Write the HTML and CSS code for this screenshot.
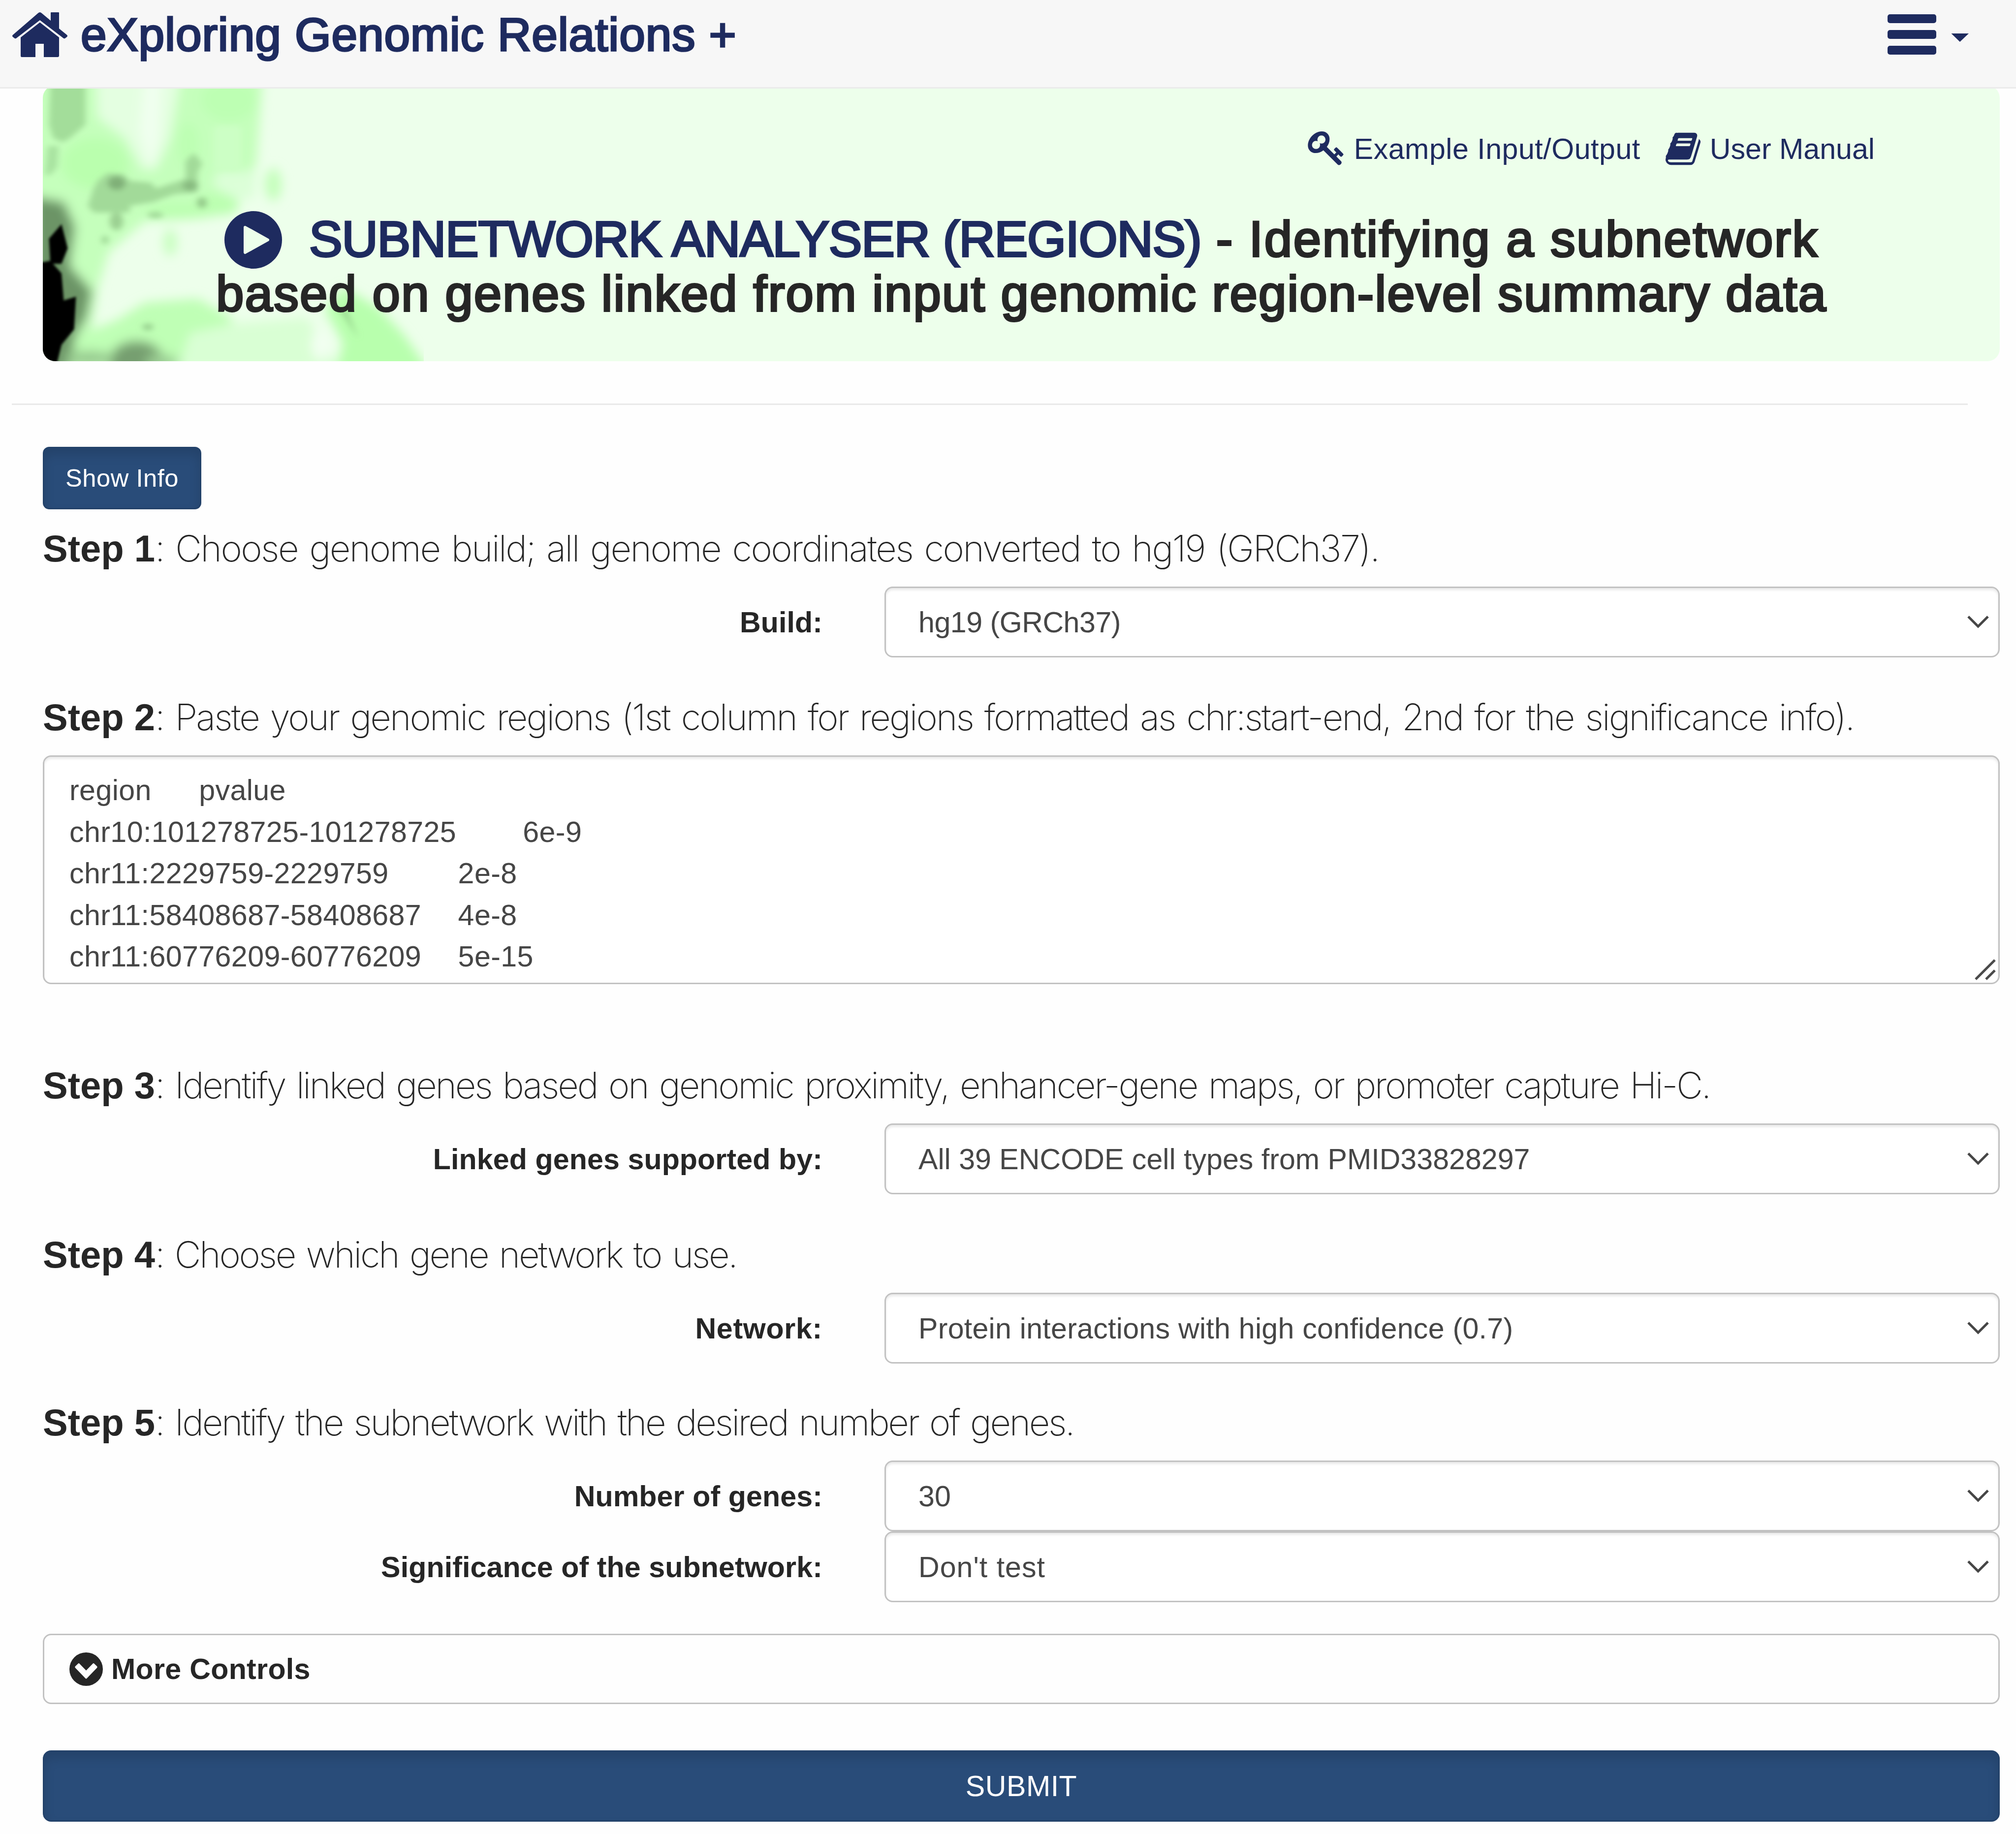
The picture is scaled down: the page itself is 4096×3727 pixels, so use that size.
FILE: index.html
```html
<!DOCTYPE html>
<html lang="en">
<head>
<meta charset="utf-8">
<title>eXploring Genomic Relations +</title>
<link rel="stylesheet" href="styles.css">
</head>
<body>
<header class="navbar">
  <a class="brand">
    <svg class="home" viewBox="0 0 112 91"><path d="M52 2Q56-2 60 2L78 17V1Q78 0 79 0H94Q95 0 95 1V33L111 46Q113 48 111 50L107 53Q105 54 103 52L56 16L9 52Q7 54 5 53L1 50Q-1 48 1 46Z"/><path d="M56 20.500L95 51V88Q95 91 92 91H64V64H47V91H19Q17 91 17 88V51Z"/></svg>
    <span class="brand-name">eXploring Genomic Relations +</span>
  </a>
  <svg class="menu" viewBox="0 0 165 82"><rect y="0" width="99" height="18" rx="5"/><rect y="32" width="99" height="18" rx="5"/><rect y="64" width="99" height="18" rx="5"/><path d="M129.500 39H165L147 56Z"/></svg>
</header>

<section class="banner">
  <svg class="art" viewBox="33 27 1367 1428" preserveAspectRatio="none">
    <defs>
      <filter id="b0" x="-50%" y="-50%" width="200%" height="200%"><feGaussianBlur stdDeviation="5 7"/></filter>
      <filter id="b1" x="-50%" y="-50%" width="200%" height="200%"><feGaussianBlur stdDeviation="11 14"/></filter>
      <filter id="b2" x="-50%" y="-50%" width="200%" height="200%"><feGaussianBlur stdDeviation="20 28"/></filter>
    </defs>
    <g filter="url(#b2)">
      <path fill="#c5ffbc" d="M-60-60H825L800 440L700 620L730 690L600 715L400 730L270 890L230 1080L190 1500H-60Z"/>
      <path fill="#e4ffe1" d="M225-40H530L490 300L440 460H390L330 300L230 190Z"/>
      <path fill="#f0ffef" d="M400-40H460L450 300L420 460L380 260Z"/>
      <path fill="#dcffd8" d="M660 470H800L790 620L700 600L640 540Z"/>
      <ellipse fill="#baffae" cx="220" cy="430" rx="120" ry="130"/>
      <ellipse fill="#bbffb0" cx="660" cy="640" rx="80" ry="50"/>
      <ellipse fill="#bbffb0" cx="520" cy="680" rx="120" ry="40"/>
      <ellipse fill="#bdffb3" cx="555" cy="330" rx="40" ry="110"/>
      <ellipse fill="#bdffb3" cx="700" cy="100" rx="100" ry="110"/>
      <ellipse fill="#c4ffbb" cx="860" cy="540" rx="30" ry="85"/>
      <ellipse fill="#c8ffc0" cx="490" cy="840" rx="24" ry="70"/>
      <path fill="#bfffb5" d="M120 1500L150 1330L300 1240L400 1150L590 1130L710 1230L720 1300L600 1500Z"/>
      <path fill="#d9ffd4" d="M560 1310L720 1260L980 1230L1100 1500H520Z"/>
      <path fill="#b8ffad" d="M1045 1190L1110 1070L1240 1180L1330 1320L1430 1530H1080L1110 1360Z"/>
      <ellipse fill="#f2fff1" cx="1030" cy="1370" rx="34" ry="80"/>
      <path fill="#6c9466" d="M0 600L110 630L150 760L130 960L210 1090L190 1230L150 1330L130 1500H0Z"/>
      <ellipse fill="#769f70" cx="370" cy="1460" rx="100" ry="110"/>
      <ellipse fill="#98cb90" cx="200" cy="1440" rx="90" ry="40"/>
      <ellipse fill="#9ccf94" cx="460" cy="1460" rx="60" ry="40"/>
    </g>
    <g filter="url(#b1)">
      <path fill="#a3dd9a" d="M60 10H186V230L130 300L105 320L70 300L55 230Z"/>
      <path fill="#a9e3a0" d="M50 340H90L85 450L60 490H40Z"/>
      <rect fill="#ccffc5" x="645" y="235" width="100" height="230" rx="20"/>
      <path fill="#a2da99" d="M230 520L265 480L320 485L345 520L420 530L440 560L545 510L545 420L575 375L605 430L588 480V580L505 590L430 630L345 650V685H215L195 650L215 560Z"/>
      <ellipse fill="#80b078" cx="298" cy="532" rx="32" ry="36"/>
      <ellipse fill="#88bb80" cx="562" cy="545" rx="28" ry="28"/>
      <ellipse fill="#94ca8b" cx="604" cy="634" rx="18" ry="28"/>
      <ellipse fill="#9fd796" cx="437" cy="697" rx="28" ry="15"/>
      <ellipse fill="#9bd092" cx="297" cy="730" rx="24" ry="46"/>
      <ellipse fill="#9fd796" cx="256" cy="826" rx="12" ry="22"/>
      <path fill="#98d58f" d="M1095 1180L1125 1195L1165 1335Z"/>
      <ellipse fill="#99d190" cx="410" cy="1278" rx="20" ry="18"/>
    </g>
    <g filter="url(#b0)">
      <path d="M0 950L60 935L100 1000L108 1140L152 1120L145 1290L100 1370L78 1500H0Z"/>
      <path d="M55 820L100 745L122 870L100 950L60 950Z"/>
    </g>
  </svg>
  <nav class="links">
    <a class="link link-example"><svg viewBox="0 128 1683 1650"><path d="M832 512q0-80-56-136t-136-56-136 56-56 136q0 42 19 83-41-19-83-19-80 0-136 56t-56 136 56 136 136 56 136-56 56-136q0-42-19-83 41 19 83 19 80 0 136-56t56-136zm851 704q0 17-49 66t-66 49q-9 0-28.500-16t-36.500-33-38.500-40-24.500-26l-96 96 220 220q28 28 28 68 0 42-39 81t-81 39q-40 0-68-28l-671-671q-176 131-365 131-163 0-265.500-102.500t-102.500-265.500q0-160 95-313t248-248 313-95q163 0 265.500 102.500t102.500 265.500q0 189-131 365l355 355 96-96q-3-3-26-24.500t-40-38.500-33-36.500-16-28.500q0-17 49-66t66-49q13 0 23 10 6 6 46 44.500t82 79.500 86.500 86 73 78 28.500 41z"/></svg><span>Example Input/Output</span></a>
    <a class="link link-manual"><svg viewBox="0 128 1664 1536"><path d="M1639 478q40 57 18 129l-275 906q-19 64-76.500 107.500t-122.500 43.500h-923q-77 0-148.500-53.500t-99.500-131.500q-24-67-2-127 0-4 3-27t4-37q1-8-3-21.500t-3-19.500q2-11 8-21t16.500-23.500 16.500-23.500q23-38 45-91.500t30-91.500q3-10 .5-30t-.5-28q3-11 17-28t17-23q21-36 42-92t25-90q1-9-2.500-32t.5-28q4-13 22-30.500t22-22.500q19-26 42.500-84.500t27.500-96.500q1-8-3-25.500t-2-26.500q2-8 9-18t18-23 17-21q8-12 16.500-30.500t15-35 16-36 19.500-32 26.500-23.500 36-11.500 47.500 5.500l-1 3q38-9 51-9h761q74 0 114 56t18 130l-274 906q-36 119-71.500 153.500t-128.500 34.500h-869q-27 0-38 15-11 16-1 43 24 70 144 70h923q29 0 56-15.500t35-41.500l300-987q7-22 5-57 38 15 59 43zm-1064 2q-4 13 2 22.500t20 9.500h608q13 0 25.500-9.500t16.500-22.500l21-64q4-13-2-22.500t-20-9.500h-608q-13 0-25.500 9.500t-16.500 22.500zm-83 256q-4 13 2 22.500t20 9.500h608q13 0 25.500-9.500t16.500-22.500l21-64q4-13-2-22.500t-20-9.500h-608q-13 0-25.500 9.500t-16.500 22.500z"/></svg><span>User Manual</span></a>
  </nav>
  <h3 class="title">
    <span class="title-line title-first"><svg class="play" viewBox="0 0 117 117"><circle cx="58.500" cy="58.500" r="58.500"/><path d="M42 33L88 58.500L42 84Z"/></svg><span class="tool">SUBNETWORK ANALYSER (REGIONS)</span> <span class="lead">- Identifying a subnetwork</span></span>
    <span class="title-line title-second">based on genes linked from input genomic region-level summary data</span>
  </h3>
</section>

<hr class="rule">

<main class="form">
  <button class="btn btn-info">Show Info</button>

  <h4 class="step step-1"><b>Step 1</b><span>: Choose genome build; all genome coordinates converted to hg19 (GRCh37).</span></h4>
  <div class="row"><label>Build:</label><div class="select"><span class="v-build">hg19 (GRCh37)</span><svg class="chev" viewBox="0 0 46 28"><path d="M3 3L23 23L43 3"/></svg></div></div>

  <h4 class="step step-2"><b>Step 2</b><span>: Paste your genomic regions (1st column for regions formatted as chr:start-end, 2nd for the significance info).</span></h4>
  <div class="textarea"><pre>region	pvalue
chr10:101278725-101278725	6e-9
chr11:2229759-2229759		2e-8
chr11:58408687-58408687	4e-8
chr11:60776209-60776209	5e-15</pre><svg class="grip" viewBox="0 0 43 43"><path d="M2 41L41 2M23 41L41 23"/></svg></div>

  <h4 class="step step-3"><b>Step 3</b><span>: Identify linked genes based on genomic proximity, enhancer-gene maps, or promoter capture Hi-C.</span></h4>
  <div class="row"><label>Linked genes supported by:</label><div class="select"><span>All 39 ENCODE cell types from PMID33828297</span><svg class="chev" viewBox="0 0 46 28"><path d="M3 3L23 23L43 3"/></svg></div></div>

  <h4 class="step step-4"><b>Step 4</b><span>: Choose which gene network to use.</span></h4>
  <div class="row"><label class="l-network">Network:</label><div class="select"><span class="v-network">Protein interactions with high confidence (0.7)</span><svg class="chev" viewBox="0 0 46 28"><path d="M3 3L23 23L43 3"/></svg></div></div>

  <h4 class="step step-5"><b>Step 5</b><span>: Identify the subnetwork with the desired number of genes.</span></h4>
  <div class="row"><label>Number of genes:</label><div class="select"><span>30</span><svg class="chev" viewBox="0 0 46 28"><path d="M3 3L23 23L43 3"/></svg></div></div>
  <div class="row"><label>Significance of the subnetwork:</label><div class="select"><span class="v-test">Don't test</span><svg class="chev" viewBox="0 0 46 28"><path d="M3 3L23 23L43 3"/></svg></div></div>

  <div class="more"><svg viewBox="0 0 100 100"><circle cx="50" cy="50" r="50"/><path d="M17.500 46Q15.500 43.500 17.500 41.500L26 33.500Q28 31.500 30 33.500L50 54L70 33.500Q72 31.500 74 33.500L82.500 41.500Q84.500 43.500 82.500 46L52 77.500Q50 79.500 48 77.500Z"/></svg><span>More Controls</span></div>
  <button class="btn btn-submit">SUBMIT</button>
</main>
</body>
</html>
```
FILE: styles.css
```css
* { box-sizing: border-box; }
body {
  margin: 0;
  background: #fefefe;
  color: #262626;
  font-family: "Liberation Sans", Arial, sans-serif;
  font-size: 59.15px;
}
svg { display: block; flex: none; }

.navbar {
  position: relative;
  z-index: 1;
  display: flex;
  justify-content: space-between;
  height: 180px;
  padding: 0 96px 37px 25px;
  background: #f7f7f7;
  border-bottom: 3px solid #ebebeb;
  color: #1e2b5f;
  fill: #1e2b5f;
}
.brand { display: flex; align-items: center; gap: 27px; }
.home { width: 112px; height: 91px; }
.brand-name { font-size: 94.6px; line-height: 140px; letter-spacing: .9px; -webkit-text-stroke: 3.6px; }
.menu { width: 165px; height: 82px; align-self: center; }

.banner {
  position: relative;
  height: 560px;
  margin: -6px 33px 0 87px;
  padding-top: 93px;
  border-radius: 25px;
  background: #edffeb;
  overflow: hidden;
}
.art { position: absolute; left: 0; top: 0; width: 774px; height: 560px; }
.links { position: relative; display: flex; justify-content: flex-end; gap: 51px; padding-right: 254px; }
.link { display: flex; align-items: center; gap: 19px; line-height: 70px; color: #1e2b5f; fill: #1e2b5f; }
.link svg { width: 73px; height: 71px; }
.link-example { gap: 21px; letter-spacing: .5px; }
.link-manual svg { width: 71px; height: 69px; }

.title { position: relative; margin: 92px 0 0; font-size: 101.4px; font-weight: 400; line-height: 111px; -webkit-text-stroke: 4px; }
.title-line { display: flex; align-items: center; height: 111px; white-space: pre; }
.title-first { padding-left: 369px; }
.title-second { padding-left: 352px; letter-spacing: 2.2px; }
.play { width: 117px; height: 117px; margin: 4px 55px 0 0; fill: #1e2b5f; }
.play path { fill: #edffeb; stroke: #edffeb; stroke-width: 6; stroke-linejoin: round; }
.tool { color: #1e2b5f; letter-spacing: -1.15px; margin-right: 30px; }
.lead { letter-spacing: 2.65px; }

.rule { height: 3px; margin: 86px 98px 0 24px; border: 0; background: #e9e9e9; }

.form { display: flex; flex-direction: column; padding: 85px 33px 0 87px; }
.btn {
  padding: 0;
  border: 3px solid #23426a;
  border-radius: 17px;
  background: #294c79;
  box-shadow: inset 0 13px 21px rgba(0, 0, 0, .125);
  color: #fff;
  font-family: inherit;
}
.btn-info { width: 322px; height: 127px; border-radius: 13px; font-size: 50.7px; letter-spacing: .5px; line-height: 121px; }
.btn-submit { height: 145px; margin-top: 94px; font-size: 59.15px; letter-spacing: .5px; }

.step { display: flex; margin: 80px 0 35px; height: 84px; font-size: 76px; line-height: 83px; font-weight: 400; white-space: nowrap; }
.step b { font-weight: 700; }
.step span { font-family: Inter, "Liberation Sans", sans-serif; font-weight: 200; font-size: 74px; word-spacing: 5px; }
.step-1 { margin-top: 38px; }
.step-1 span { letter-spacing: -2.5px; }
.step-2 span { letter-spacing: -2.9px; }
.step-3 { margin-top: 164px; }
.step-3 span { letter-spacing: -3.16px; }
.step-4 { margin-top: 81px; }
.step-4 span { letter-spacing: -3.25px; }
.step-5 { margin-top: 78px; }
.step-5 span { letter-spacing: -3.33px; }

.row { display: grid; grid-template-columns: 1584px 1fr; column-gap: 126px; height: 144px; align-items: center; }
.row label { font-weight: 700; text-align: right; letter-spacing: .1px; }
.row .l-network { letter-spacing: .7px; }
.select {
  display: flex;
  align-items: center;
  justify-content: space-between;
  height: 144px;
  padding: 0 18px 0 66px;
  border: 3px solid #c2c2c2;
  border-radius: 17px;
  background: #fff;
  box-shadow: inset 0 4px 5px rgba(0, 0, 0, .09);
  color: #464646;
}
.chev { width: 46px; height: 28px; fill: none; stroke: #464646; stroke-width: 5; }
.v-build { letter-spacing: -.5px; }
.v-network { letter-spacing: .25px; }
.v-test { letter-spacing: 1px; }

.textarea {
  position: relative;
  height: 465px;
  padding: 26px 51px 0;
  border: 3px solid #c2c2c2;
  border-radius: 17px;
  background: #fff;
  box-shadow: inset 0 4px 5px rgba(0, 0, 0, .09);
  color: #464646;
}
.textarea pre { margin: 0; font: inherit; line-height: 84.5px; letter-spacing: .4px; tab-size: 131.6px; }
.grip { position: absolute; right: 5px; bottom: 5px; width: 43px; height: 43px; fill: none; stroke: #4a4a4a; stroke-width: 5; }

.more {
  display: flex;
  align-items: center;
  gap: 17px;
  height: 143px;
  margin-top: 64px;
  padding-left: 51px;
  border: 3px solid #c2c2c2;
  border-radius: 17px;
  font-weight: 700;
  letter-spacing: .3px;
  fill: #262626;
}
.more svg { width: 68px; height: 68px; }
.more path { fill: #fff; }
```
